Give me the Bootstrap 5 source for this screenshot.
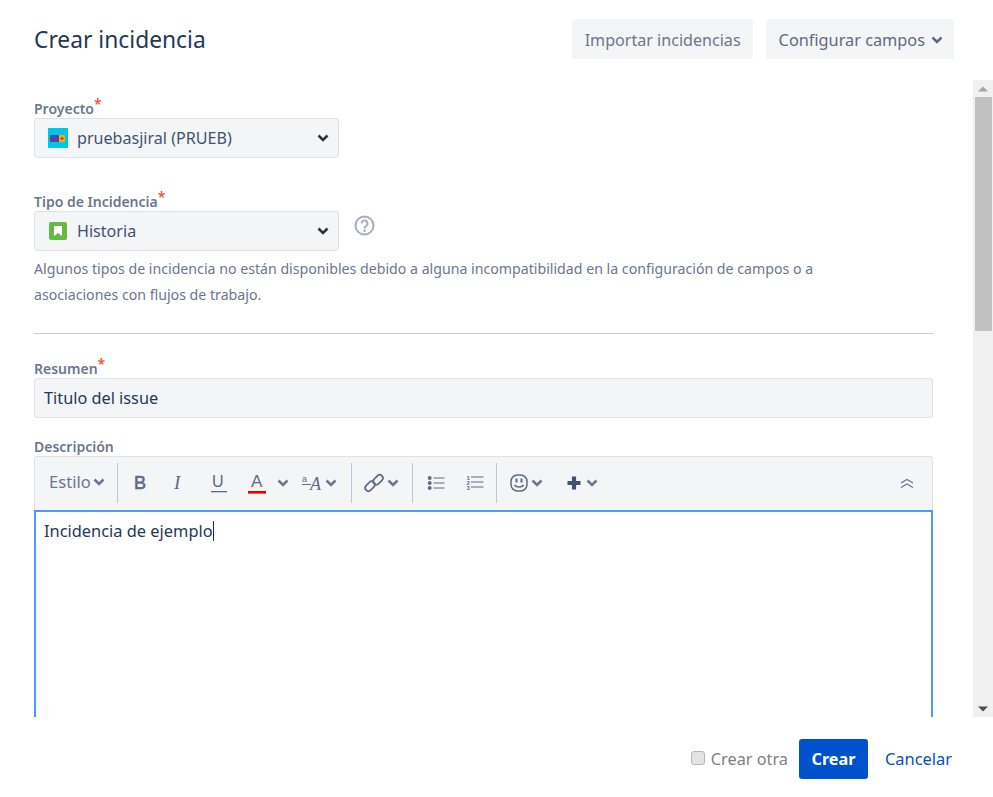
<!DOCTYPE html>
<html lang="es">
<head>
<meta charset="utf-8">
<title>Crear incidencia</title>
<link href="https://cdn.jsdelivr.net/npm/bootstrap@5.3.0/dist/css/bootstrap.min.css" rel="stylesheet">
<style>
html,body{height:100%;overflow:hidden;background:#fff}
body{font-family:"Noto Sans","Open Sans",sans-serif;color:#253858;font-size:16px}
.dlg{width:993px;height:797px}
.dlg-head{height:80px;padding:19px 39px 0 34px}
.dlg-title{font-size:22.8px;font-weight:400;line-height:40px;color:#253858;margin:1px 0 0}
.btn-soft{background:#f4f5f7;color:#6b778c;border:0;border-radius:3px;height:40px;padding:2px 12px 0 13px;font-size:16.1px;line-height:38px;white-space:nowrap}
.btn-soft.dk{color:#5e6c84;padding-right:11px;font-size:16.3px;gap:6px}
.dlg-mid{height:637px;overflow:hidden}
.dlg-form{width:973px;padding:0 40px 0 34px;overflow:hidden}
.fld-label{font-size:14px;font-weight:600;color:#6b778c;line-height:18px;margin:0;display:block}
.req{color:#e2583e;font-size:14px;position:relative;top:-5px;line-height:0}
.fake-sel{width:305px;height:40px;background:#f4f5f7;border:1px solid #dfe1e6;border-radius:3px;padding:0 9px 0 13px;color:#42526e;font-size:16.1px}
.lbl-1{padding-top:20px}
.lbl-2{padding-top:35px}
.help{font-size:14.17px;line-height:26px;color:#6b778c;margin:5px 0 0;width:800px}
.rule{border:0;border-top:1px solid #c9cbd0;opacity:1;margin:25px 0 26px}
.inp{height:40px;background:#f4f5f7;border:1px solid #dfe1e6;border-radius:3px;padding:0 9px;font-size:16.3px;line-height:38px;color:#253858}
.lbl-3{margin-top:20px}
.tbar{height:54px;background:#f4f5f7;border:1px solid #dfe1e6;border-bottom:0;border-radius:3px 3px 0 0;padding:0 18px 2px 14px;color:#5e6c84}
.tsep{width:1px;height:40px;background:#c1c7d0;flex:none}
.tstyle{font-size:16.6px;width:68px;color:#6b778c;gap:2px}
.ted{height:240px;border:2px solid #4c9aff;border-bottom:0;padding:7px 8px;font-size:16.4px;line-height:24px;color:#253858;background:#fff}
.caret-bar{display:inline-block;width:1px;height:20px;background:#172b4d;vertical-align:-4px}
.sb{width:20px;background:#f0f0f0;flex:none}
.sb-a{height:17px}
.sb-thumb{height:234px;width:17px;margin-left:2px;background:#c1c1c1}
.sb-fill{flex:1}
.dlg-foot{height:80px;padding:4px 41px 0 0}
.otra{color:#808080;font-size:16.3px;margin:0 11px 0 0}
.otra input{appearance:none;width:14px;height:14px;margin:0 6px 5px 0;vertical-align:middle;background:#e4e4e4;border:1px solid #b8b8b8;border-radius:3px}
.btn-crear{background:#0052cc;color:#fff;border:0;border-radius:3px;height:40px;width:69px;padding:0;font-weight:700;font-size:16.2px}
.lnk-cancel{color:#0052cc;font-size:16.4px;text-decoration:none;margin-left:17px}
.ico{display:block;flex:none;overflow:visible}
.mi{margin-right:9px}
</style>
</head>
<body>
<div class="dlg d-flex flex-column">
  <div class="dlg-head d-flex justify-content-between align-items-start">
    <h1 class="dlg-title">Crear incidencia</h1>
    <div class="d-flex" style="column-gap:13px">
      <button class="btn-soft" type="button">Importar incidencias</button>
      <button class="btn-soft dk d-flex align-items-center" type="button">Configurar campos
        <svg class="ico" width="12" height="8" viewBox="0 0 12 8"><path d="M1.500 1.500 6 6l4.500-4.500" fill="none" stroke="#5e6c84" stroke-width="2.600"/></svg>
      </button>
    </div>
  </div>
  <div class="dlg-mid d-flex justify-content-between">
    <div class="dlg-form">
      <div class="lbl-1"><span class="fld-label">Proyecto<span class="req">*</span></span></div>
      <div class="fake-sel d-flex align-items-center">
        <svg class="ico mi" width="20" height="20" viewBox="0 0 20 20"><rect width="20" height="20" fill="#00c7e6"/><rect x="2" y="7" width="9" height="7" rx="1" fill="#5243aa"/><rect x="11" y="7" width="6" height="7" rx="1" fill="#ffab00"/><path d="M14 9v3M12.500 10.500h3" stroke="#bf2600" stroke-width="1"/></svg>
        <span class="flex-grow-1">pruebasjiral (PRUEB)</span>
        <svg class="ico" width="12" height="8" viewBox="0 0 12 8"><path d="M1.500 1.500 6 6l4.500-4.500" fill="none" stroke="#333" stroke-width="2.600"/></svg>
      </div>
      <div class="lbl-2"><span class="fld-label">Tipo de Incidencia<span class="req">*</span></span></div>
      <div class="d-flex">
        <div class="fake-sel d-flex align-items-center">
          <svg class="ico mi" width="20" height="20" viewBox="0 0 20 20"><rect x="1" y="1" width="18" height="18" rx="2" fill="#65ba43"/><path d="M6 5h8v10l-4-3-4 3z" fill="#fff"/></svg>
          <span class="flex-grow-1">Historia</span>
          <svg class="ico" width="12" height="8" viewBox="0 0 12 8"><path d="M1.500 1.500 6 6l4.500-4.500" fill="none" stroke="#333" stroke-width="2.600"/></svg>
        </div>
        <svg class="ico mt-1" style="margin-left:15px" width="21" height="21" viewBox="0 0 21 21"><circle cx="10.500" cy="10.500" r="9" fill="none" stroke="#a5adba" stroke-width="2"/><path d="M7.500 8.500a3 3 0 1 1 4.700 2.500c-1.200.8-1.700 1.300-1.700 2.500" fill="none" stroke="#a5adba" stroke-width="2"/><circle cx="10.500" cy="15.800" r="1.300" fill="#a5adba"/></svg>
      </div>
      <p class="help">Algunos tipos de incidencia no están disponibles debido a alguna incompatibilidad en la configuración de campos o a asociaciones con flujos de trabajo.</p>
      <hr class="rule">
      <span class="fld-label">Resumen<span class="req">*</span></span>
      <div class="inp">Titulo del issue</div>
      <div class="lbl-3"><span class="fld-label">Descripción</span></div>
      <div class="tbar d-flex align-items-center">
        <span class="tstyle d-flex align-items-center">Estilo<svg class="ico" width="12" height="8" viewBox="0 0 12 8"><path d="M1.500 1.500 6 6l4.500-4.500" fill="none" stroke="#6b778c" stroke-width="2.600"/></svg></span>
        <span class="tsep"></span>
        <svg class="ico" style="margin-left:15px" width="16" height="18" viewBox="0 0 16 18"><text x="1" y="15" font-family="Liberation Sans" font-size="18" font-weight="400" fill="#5e6c84" stroke="#5e6c84" stroke-width=".6">B</text></svg>
        <svg class="ico" style="margin-left:23px" width="16" height="18" viewBox="0 0 16 18"><text x="2" y="15" font-family="Liberation Serif" font-style="italic" font-size="19" fill="#5e6c84">I</text></svg>
        <svg class="ico" style="margin-left:23px" width="16" height="20" viewBox="0 0 16 20"><text x="1" y="14" font-family="Liberation Sans" font-size="16" fill="#5e6c84">U</text><rect y="18" width="16" height="1.300" fill="#5e6c84"/></svg>
        <svg class="ico" style="margin-left:21px" width="19" height="24" viewBox="0 0 19 24"><text x="3" y="16" font-family="Liberation Sans" font-size="17" fill="#5e6c84">A</text><rect y="20" width="18" height="2.600" fill="#e60000"/></svg>
        <svg class="ico" style="margin-left:10px" width="12" height="8" viewBox="0 0 12 8"><path d="M1.500 1.500 6 6l4.500-4.500" fill="none" stroke="#6b778c" stroke-width="2.600"/></svg>
        <svg class="ico" style="margin-left:13px" width="22" height="18" viewBox="0 0 22 18"><text x="0" y="8" font-family="Liberation Sans" font-size="9" fill="#5e6c84">a</text><text x="8" y="16" font-family="Liberation Serif" font-style="italic" font-size="18" fill="#5e6c84">A</text><rect x="0" y="10" width="9" height="1" fill="#5e6c84"/></svg>
        <svg class="ico" style="margin-left:1px" width="12" height="8" viewBox="0 0 12 8"><path d="M1.500 1.500 6 6l4.500-4.500" fill="none" stroke="#6b778c" stroke-width="2.600"/></svg>
        <span class="tsep" style="margin-left:14px"></span>
        <svg class="ico" style="margin-left:11px" width="22" height="22" viewBox="0 0 22 22"><g fill="none" stroke="#5e6c84" stroke-width="1.700"><rect x="1.500" y="11" width="11" height="6.500" rx="3.200" transform="rotate(-45 7 14.200)"/><rect x="9.500" y="4.500" width="11" height="6.500" rx="3.200" transform="rotate(-45 15 7.700)"/></g></svg>
        <svg class="ico" style="margin-left:2px" width="12" height="8" viewBox="0 0 12 8"><path d="M1.500 1.500 6 6l4.500-4.500" fill="none" stroke="#6b778c" stroke-width="2.600"/></svg>
        <span class="tsep" style="margin-left:13px"></span>
        <svg class="ico" style="margin-left:14px" width="18" height="14" viewBox="0 0 18 14"><g fill="#5e6c84"><circle cx="2.700" cy="2" r="2"/><circle cx="2.700" cy="7" r="2"/><circle cx="2.700" cy="12" r="2"/><rect x="6.500" y="1.500" width="11" height="1"/><rect x="6.500" y="6.500" width="11" height="1"/><rect x="6.500" y="11.500" width="11" height="1"/></g></svg>
        <svg class="ico" style="margin-left:21px" width="18" height="15" viewBox="0 0 18 15"><g fill="#5e6c84"><text x="0.500" y="5" font-family="Liberation Sans" font-weight="700" font-size="6">1</text><text x="0.500" y="10" font-family="Liberation Sans" font-weight="700" font-size="6">2</text><text x="0.500" y="15" font-family="Liberation Sans" font-weight="700" font-size="6">3</text><rect x="5" y="1.500" width="12.500" height="1"/><rect x="5" y="6.500" width="12.500" height="1"/><rect x="5" y="11.500" width="12.500" height="1"/></g></svg>
        <span class="tsep" style="margin-left:12px"></span>
        <svg class="ico" style="margin-left:13px" width="18" height="18" viewBox="0 0 18 18"><rect x="1" y="1" width="16" height="16" rx="6.500" fill="none" stroke="#5e6c84" stroke-width="1.500"/><rect x="5.500" y="4.500" width="2" height="4" fill="#5e6c84"/><rect x="10.500" y="4.500" width="2" height="4" fill="#5e6c84"/><path d="M4.500 11c1.500 2.500 7.500 2.500 9 0" fill="none" stroke="#5e6c84" stroke-width="1.500"/></svg>
        <svg class="ico" style="margin-left:3px" width="12" height="8" viewBox="0 0 12 8"><path d="M1.500 1.500 6 6l4.500-4.500" fill="none" stroke="#6b778c" stroke-width="2.600"/></svg>
        <svg class="ico" style="margin-left:23px" width="16" height="16" viewBox="0 0 16 16"><path d="M8 1.500v13M1.500 8h13" stroke="#42526e" stroke-width="4.200"/></svg>
        <svg class="ico" style="margin-left:4px" width="12" height="8" viewBox="0 0 12 8"><path d="M1.500 1.500 6 6l4.500-4.500" fill="none" stroke="#6b778c" stroke-width="2.600"/></svg>
        <svg class="ico ms-auto" width="14" height="10" viewBox="0 0 14 10"><path d="M1 5 7 1.500 13 5M1 9.500 7 6l6 3.500" fill="none" stroke="#6b778c" stroke-width="1.300"/></svg>
      </div>
      <div class="ted">Incidencia de ejemplo<span class="caret-bar"></span></div>
    </div>
    <div class="sb d-flex flex-column">
      <div class="sb-a d-flex align-items-center justify-content-center"><svg width="10" height="6" viewBox="0 0 10 6"><path d="M0 5.500 5 .5l5 5z" fill="#a3a3a3"/></svg></div>
      <div class="sb-thumb"></div>
      <div class="sb-fill"></div>
      <div class="sb-a d-flex align-items-center justify-content-center"><svg width="10" height="6" viewBox="0 0 10 6"><path d="M0 .5h10l-5 5z" fill="#505050"/></svg></div>
    </div>
  </div>
  <div class="dlg-foot d-flex justify-content-end align-items-center">
    <div class="d-flex align-items-center">
      <label class="otra"><input type="checkbox">Crear otra</label>
      <button class="btn-crear" type="button">Crear</button>
      <a class="lnk-cancel" href="#">Cancelar</a>
    </div>
  </div>
</div>
</body>
</html>
